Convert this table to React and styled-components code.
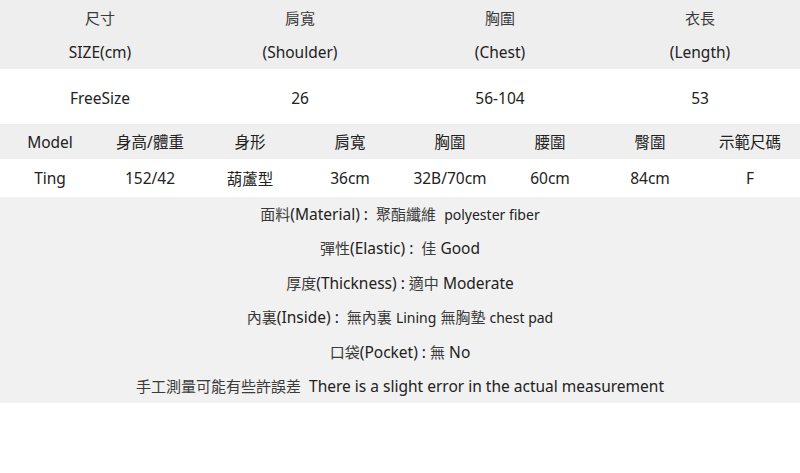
import React from "react";
import styled, { createGlobalStyle } from "styled-components";

const GlobalStyle = createGlobalStyle`
  html, body {
    margin: 0;
    padding: 0;
    background: #fff;
  }
  body {
    font-family: "Noto Sans", "Noto Sans CJK TC", sans-serif;
    color: #222;
  }
`;

const sizeHead = [
  ["尺寸", "SIZE(cm)"],
  ["肩寬", "(Shoulder)"],
  ["胸圍", "(Chest)"],
  ["衣長", "(Length)"],
];
const sizeRow = ["FreeSize", "26", "56-104", "53"];

const modelHead = ["Model", "身高/體重", "身形", "肩寬", "胸圍", "腰圍", "臀圍", "示範尺碼"];
const modelRow = ["Ting", "152/42", "葫蘆型", "36cm", "32B/70cm", "60cm", "84cm", "F"];

function SizeSheet() {
  return (
    <Sheet>
      <Band $bg="#eeeeee" $cols={4}>
        {sizeHead.map(([zh]) => (
          <Cell key={zh} $h={35}>
            <Zh>{zh}</Zh>
          </Cell>
        ))}
        {sizeHead.map(([zh, en]) => (
          <Cell key={en} $h={34}>
            {en}
          </Cell>
        ))}
      </Band>
      <Band $bg="#ffffff" $cols={4}>
        {sizeRow.map((v) => (
          <Cell key={v} $h={55} $shift={2}>
            {v}
          </Cell>
        ))}
      </Band>

      <Band $bg="#efefef" $cols={8}>
        {modelHead.map((v) => (
          <Cell key={v} $h={35}>
            {v}
          </Cell>
        ))}
      </Band>
      <Band $bg="#ffffff" $cols={8}>
        {modelRow.map((v) => (
          <Cell key={v} $h={38}>
            {v}
          </Cell>
        ))}
      </Band>

      <Notes>
        <Line>
          <Zh>面料</Zh>(Material) :  <Zh>聚酯纖維</Zh>  <Small>polyester fiber</Small>
        </Line>
        <Line>
          <Zh>彈性</Zh>(Elastic) :  <Zh>佳</Zh> Good
        </Line>
        <Line>
          <Zh>厚度</Zh>(Thickness) : <Zh>適中</Zh> Moderate
        </Line>
        <Line>
          <Zh>內裏</Zh>(Inside) :  <Zh>無內裏</Zh> <Small>Lining</Small> <Zh>無胸墊</Zh>{" "}
          <Small>chest pad</Small>
        </Line>
        <Line>
          <Zh>口袋</Zh>(Pocket) : <Zh>無</Zh> No
        </Line>
        <Line>
          <Zh>手工測量可能有些許誤差</Zh>  There is a slight error in the actual measurement
        </Line>
      </Notes>
    </Sheet>
  );
}

export default function App() {
  return (
    <>
      <GlobalStyle />
      <SizeSheet />
    </>
  );
}

const Sheet = styled.div`
  width: 800px;
  font-size: 15.5px;
`;

const Band = styled.div`
  display: grid;
  grid-template-columns: repeat(${(p) => p.$cols}, 1fr);
  background: ${(p) => p.$bg};
`;

const Cell = styled.div`
  height: ${(p) => p.$h}px;
  display: flex;
  align-items: center;
  justify-content: center;
  padding-top: ${(p) => p.$shift || 0}px;
  box-sizing: border-box;
  white-space: nowrap;
`;

const Zh = styled.span`
  color: #3a3a3a;
  font-size: 15px;
`;

const Small = styled.span`
  font-size: 14px;
`;

const Notes = styled.div`
  background: #f1f1f1;
`;

const Line = styled.div`
  height: 34.4px;
  line-height: 34.4px;
  text-align: center;
  white-space: pre;
`;
